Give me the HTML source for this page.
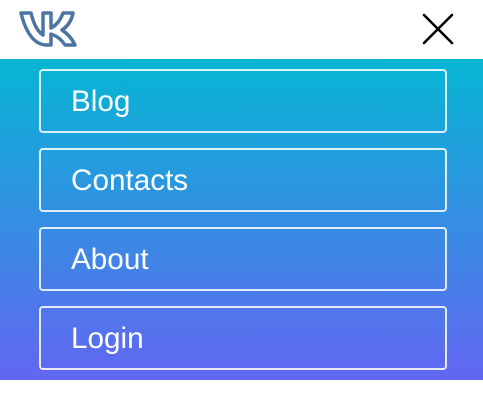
<!DOCTYPE html>
<html><head><style>
html,body{margin:0;padding:0;width:483px;height:402px;background:#fff;overflow:hidden;font-family:"Liberation Sans",sans-serif}
.menu{position:absolute;left:0;top:59px;width:483px;height:321px;background:linear-gradient(#06b6d4,#6366f1)}
.btn{position:absolute;left:39px;width:374px;height:60px;border:2px solid rgba(255,255,255,.85);border-radius:4px;color:#fff;font-size:29.7px;line-height:62px;padding-left:30px;box-sizing:content-box}
</style></head><body>
<svg style="position:absolute;left:17px;top:8px" width="62" height="40" viewBox="0 0 62 40">
<path d="M4 5 L14 5 Q18 22 26 27 L26 5 L34 5 L34 20 Q42 16 46 5 L56 5 Q54 16 45 22 Q54 28 58 37 L48 37 Q43 29 34 26 L34 37 L30 37 Q12 37 4 5 Z" fill="none" stroke="#4c75a3" stroke-width="3.5" stroke-linejoin="round"/>
</svg>
<svg style="position:absolute;left:421px;top:12px" width="34" height="34" viewBox="0 0 34 34">
<path d="M3 3 L31 31 M31 3 L3 31" stroke="#000" stroke-width="2.6" stroke-linecap="round"/>
</svg>
<div class="menu">
<div class="btn" style="top:10px">Blog</div>
<div class="btn" style="top:89px">Contacts</div>
<div class="btn" style="top:168px">About</div>
<div class="btn" style="top:247px">Login</div>
</div>
</body></html>
